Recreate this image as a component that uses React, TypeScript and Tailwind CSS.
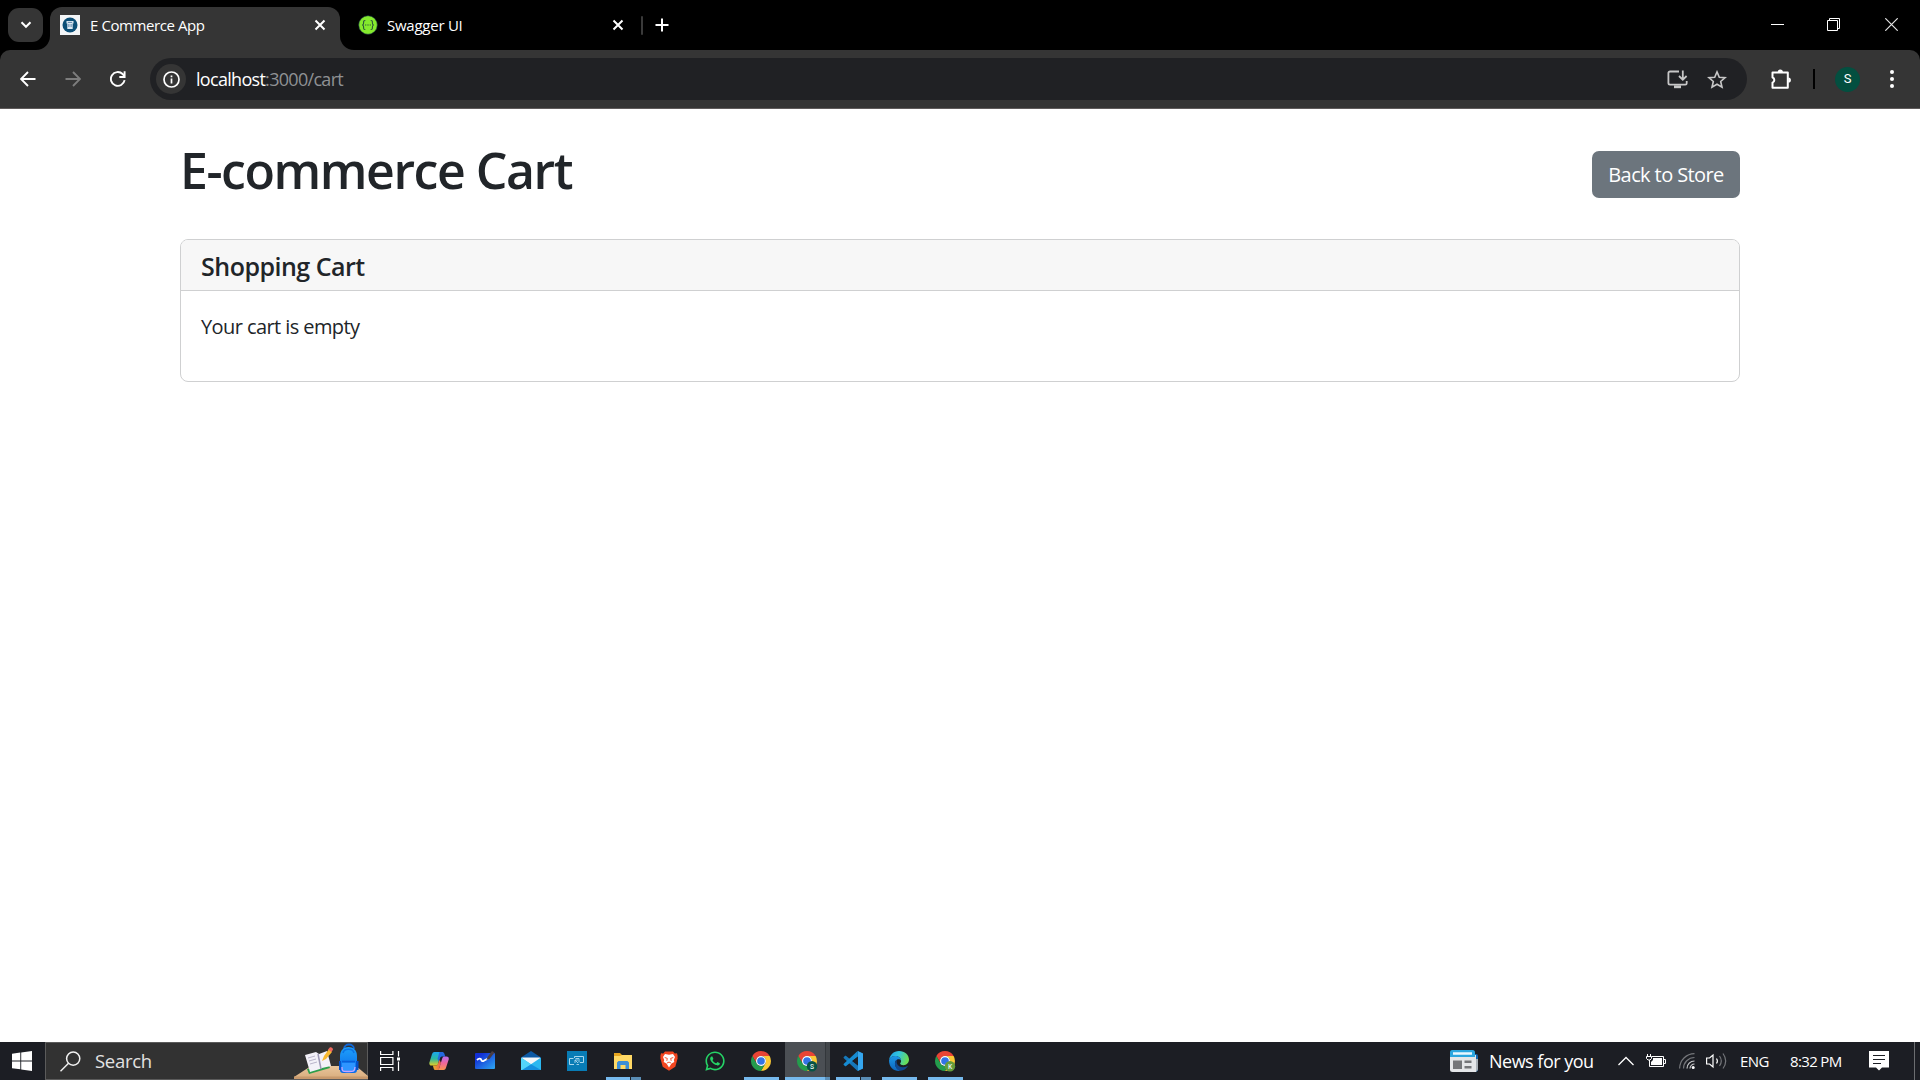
import React from "react";
import { FaWhatsapp } from "react-icons/fa";

function ChromeLogo({ badge, color }: { badge?: string; color?: string }) {
  return (
    <svg width="20" height="20" viewBox="0 0 48 48" className="overflow-visible">
      <path fill="#e94435" d="M24 13H43.05A22 22 0 0 0 4.95 13L14.47 29.5A11 11 0 0 1 24 13Z" transform="translate(-2.2 -2.2) scale(1.09)" />
      <path fill="#fcc934" d="M24 13H43.05A22 22 0 0 1 24 46L33.53 29.5A11 11 0 0 0 24 13Z" transform="translate(-2.2 -2.2) scale(1.09)" />
      <path fill="#249c4c" d="M14.47 29.5L4.95 13A22 22 0 0 0 24 46L33.53 29.5A11 11 0 0 1 14.47 29.5Z" transform="translate(-2.2 -2.2) scale(1.09)" />
      <circle cx="24" cy="24" r="12" fill="#fff" />
      <circle cx="24" cy="24" r="9.2" fill="#3273e6" />
      {badge && (
        <>
          <circle cx="36" cy="36.500" r="12.500" fill={color} />
          <text x="36" y="42.500" fontSize="16" fontFamily="Roboto, sans-serif" fontWeight="500" fill="#e8f3ee" textAnchor="middle">{badge}</text>
        </>
      )}
    </svg>
  );
}

function CloseX() {
  return (
    <svg width="12" height="12" viewBox="0 0 12 12" stroke="#fff" strokeWidth="2" fill="none">
      <path d="M1.5 1.5l9 9M10.5 1.5l-9 9" />
    </svg>
  );
}

function TabStrip() {
  return (
    <div className="flex h-[50px] bg-black">
      <div className="z-10 mt-2 ml-2 flex h-[34px] w-[35px] items-center justify-center rounded-[11px] bg-[#353535]">
        <svg width="12" height="8" viewBox="0 0 12 8" fill="none" stroke="#fff" strokeWidth="2"><path d="M1.5 1.3L6 5.8l4.500-4.500" /></svg>
      </div>
      <div className="relative mt-[7px] ml-[7px] flex h-[43px] w-[290px] items-center rounded-t-[12px] bg-[#353535] pr-[14px] pb-[7px] pl-[10px]">
        <div className="absolute bottom-0 -left-[14px] size-[14px] bg-[#353535]"><div className="size-full rounded-br-[14px] bg-black" /></div>
        <div className="absolute -right-[14px] bottom-0 size-[14px] bg-[#353535]"><div className="size-full rounded-bl-[14px] bg-black" /></div>
        <svg width="20" height="20" viewBox="0 0 20 20">
          <rect width="20" height="20" fill="#f3f5f7" />
          <circle cx="10" cy="10" r="7.500" fill="#0c4f77" />
          <path d="M6.500 6h7v2.500h-.8V14H7.300V8.500h-.8z" fill="#dce9f2" />
          <path d="M7.800 7.400h4.400M8.900 9v3M11.100 9v3" stroke="#5b83a8" strokeWidth="1" />
        </svg>
        <span className="mt-px ml-[10px] flex-1 text-[15px] tracking-[-0.420px] text-white">E Commerce App</span>
        <CloseX />
      </div>
      <div className="mt-[7px] flex h-[36px] w-[301px] items-center pr-[17px] pl-[18px]">
        <svg width="20" height="20" viewBox="0 0 20 20">
          <circle cx="10" cy="10" r="9.300" fill="#85ea2d" stroke="#173647" strokeWidth=".6" />
          <path d="M7.300 5.500c-1.800 0-1.700.7-1.700 2.500 0 1.300-.3 1.900-1.300 2 1 .1 1.300.7 1.300 2 0 1.800-.1 2.500 1.700 2.500M12.700 5.500c1.800 0 1.700.7 1.700 2.500 0 1.300.3 1.900 1.300 2-1 .1-1.300.7-1.300 2 0 1.800.1 2.500-1.700 2.500" fill="none" stroke="#29523b" strokeWidth="1.100" />
          <path d="M7.100 10h1.200M9.400 10h1.200M11.700 10h1.200" stroke="#29523b" strokeWidth="1.200" />
        </svg>
        <span className="mt-px ml-[9px] flex-1 text-[15px] tracking-[-0.250px] text-white">Swagger UI</span>
        <CloseX />
      </div>
      <div className="mt-4 h-[19px] w-[2px] rounded bg-[#3a3a3a]" />
      <svg className="mt-[18px] ml-[12px]" width="14" height="14" viewBox="0 0 14 14" stroke="#fff" strokeWidth="2"><path d="M.5 7h13M7 .5v13" /></svg>
      <div className="ml-auto flex pt-[18px] pr-[22px]">
        <svg width="13" height="13" viewBox="0 0 13 13"><path d="M0 6.500h13" stroke="#fff" /></svg>
        <svg className="ml-[43px]" width="13" height="13" viewBox="0 0 13 13" fill="none" stroke="#fff"><path d="M.5 2.500h10v10H.5zM2.500 2.500v-2h10v10h-2" /></svg>
        <svg className="ml-[45px]" width="13" height="13" viewBox="0 0 13 13" stroke="#e4e4e4" strokeWidth="1.200"><path d="M.3.3l12.400 12.400M12.700.3L.3 12.700" /></svg>
      </div>
    </div>
  );
}

function Toolbar() {
  return (
    <div className="bg-black">
      <div className="flex h-[59px] items-center rounded-t-[10px] border-b border-[#5f5b5b] bg-[#353535] pl-[20px]">
        <svg width="16" height="16" viewBox="0 0 16 16" fill="none" stroke="#fff" strokeWidth="1.900"><path d="M15.500 8H1.500M8 1L1 8l7 7" /></svg>
        <svg className="ml-[29px]" width="16" height="16" viewBox="0 0 16 16" fill="none" stroke="#7d7d7d" strokeWidth="1.900"><path d="M.5 8h14M8 1l7 7-7 7" /></svg>
        <svg className="ml-[29px]" width="16" height="16" viewBox="0 0 16 16" fill="none" stroke="#fff" strokeWidth="1.900"><path d="M14.600 9.200A6.900 6.900 0 1 1 12.600 3L14.500 5" /><path d="M14.600.3V6H9.300" /></svg>
        <div className="ml-[24px] flex h-[42px] w-[1597px] items-center rounded-full bg-[#202124] pl-[6px]">
          <div className="flex size-[30px] items-center justify-center rounded-full bg-[#353535]">
            <svg width="17" height="17" viewBox="0 0 17 17" fill="none" stroke="#fff" strokeWidth="1.700"><circle cx="8.500" cy="8.500" r="7.500" /><path d="M8.500 7.500v5M8.500 4.500v1.700" /></svg>
          </div>
          <span className="ml-[10px] text-[18px] tracking-[-0.700px] text-[#8f9194]"><span className="text-white">localhost</span>:3000/cart</span>
          <svg className="ml-auto" width="21" height="19" viewBox="0 0 21 19" fill="none" stroke="#c7c7c7" strokeWidth="1.800"><path d="M12 1.500H3a1.600 1.600 0 0 0-1.600 1.600v10A1.600 1.600 0 0 0 3 14.700h15.300a1.400 1.400 0 0 0 1.400-1.400V11M15.800.5v8.800M12 6l3.800 3.800L19.600 6" /><path d="M7 16.800h7" strokeWidth="2.800" /></svg>
          <svg className="mr-[20px] ml-[19px]" width="20" height="19" viewBox="0 0 20 19" fill="none" stroke="#c7c7c7" strokeWidth="1.600"><path d="M10 1.900l2.300 5.300 5.800.5-4.400 3.800 1.300 5.700-5-3-5 3 1.300-5.700-4.400-3.800 5.800-.5z" /></svg>
        </div>
        <svg className="ml-[24px]" width="21" height="21" viewBox="0 0 21 21"><path d="M1.500 3.400h15.300v15.300H1.500v-5.100a2.700 2.700 0 0 0 0-5.100z" fill="none" stroke="#fff" strokeWidth="2" strokeLinejoin="round" /><path d="M6.700 3a2.600 2.600 0 0 1 5.200 0zM17.300 8.400a2.600 2.600 0 0 1 0 5.200z" fill="#fff" /></svg>
        <div className="ml-[21px] h-5 w-[2px] bg-black" />
        <div className="ml-[20px] flex size-[25px] items-center justify-center rounded-full bg-[#034f40] font-[Roboto] text-[13px] text-white">S</div>
        <svg className="ml-[30px]" width="4" height="18" viewBox="0 0 4 18" fill="#fff"><circle cx="2" cy="2" r="2" /><circle cx="2" cy="9" r="2" /><circle cx="2" cy="16" r="2" /></svg>
      </div>
    </div>
  );
}

function CartPage() {
  return (
    <main className="flex-1 bg-white text-[#212529]">
      <div className="mx-auto w-[1560px] pt-[32px]">
        <div className="flex items-start justify-between">
          <h1 className="text-[50px] leading-[59px] font-semibold tracking-[-1.450px]">E-commerce Cart</h1>
          <button className="mt-[10px] h-[47px] w-[148px] rounded-[7px] bg-[#6c757d] text-[20px] tracking-[-0.600px] whitespace-nowrap text-white">Back to Store</button>
        </div>
        <section className="mt-[39px] overflow-hidden rounded-[8px] border border-[#cfd0d1]">
          <div className="h-[51px] border-b border-[#cfd0d1] bg-[#f7f7f7] px-5">
            <h2 className="text-[25px] leading-[52px] font-semibold tracking-[-0.500px]">Shopping Cart</h2>
          </div>
          <div className="h-[90px] px-5 pt-[20px]">
            <p className="text-[20px] leading-[32px] tracking-[-0.580px]">Your cart is empty</p>
          </div>
        </section>
      </div>
    </main>
  );
}

function TaskCell({ line, children }: { line?: "full" | "split" | "active"; children: React.ReactNode }) {
  return (
    <div className={line === "active" ? "relative flex h-full w-[46px] items-center justify-center bg-[linear-gradient(90deg,#1c1e24_0_1px,#4b4f54_1px_41px,#33373b_41px_42px,#42464a_42px)]" : "relative flex h-full w-[46px] items-center justify-center"}>
      {children}
      {line === "full" && <div className="absolute bottom-0 left-[6px] h-[3px] w-[35px] bg-[#76b9ed]" />}
      {line === "split" && <div className="absolute bottom-0 left-[6px] flex h-[3px] w-[35px] gap-px"><div className="w-[24px] bg-[#76b9ed]" /><div className="flex-1 bg-[#5a8db5]" /></div>}
      {line === "active" && <div className="absolute bottom-0 left-[1px] flex h-[3px] w-[45px]"><div className="w-[40px] bg-[#76b9ed]" /><div className="flex-1 bg-[#5a8db5]" /></div>}
    </div>
  );
}

function SearchArt() {
  return (
    <svg width="74" height="36" viewBox="0 0 74 36">
      <defs>
        <linearGradient id="desk" x1="0" y1="0" x2="0" y2="1"><stop offset="0" stopColor="#e9c59b" /><stop offset="1" stopColor="#d7ab7c" /></linearGradient>
        <linearGradient id="bag" x1="0" y1="0" x2="0" y2="1"><stop offset="0" stopColor="#1fa1fb" /><stop offset="1" stopColor="#0869e8" /></linearGradient>
      </defs>
      <path d="M0 34L17 23h45l12 10v3H0z" fill="url(#desk)" />
      <path d="M0 33.500h74V36H0z" fill="#c8996c" />
      <path d="M13 26l21-6 2 5-21 6z" fill="#2d9e4b" />
      <path d="M11 12l11-3 3 2 8-3 4 15-9 2-2 1-10 3z" fill="#f3f1f8" />
      <path d="M24 11l3 15" stroke="#9d98b5" strokeWidth="1.500" />
      <path d="M14 15l7-2M15 18l7-2M16 21l7-2" stroke="#b9b5ca" />
      <path d="M28 18l2-5 5-7 3 3-6 7z" fill="#f8b930" />
      <path d="M34 6.500l2-2.200c1.500-.5 3 .7 3 2.200L37.500 9z" fill="#f0695e" />
      <path d="M50 6c0-6 10-6 10 0" fill="none" stroke="#1268d8" strokeWidth="1.800" />
      <path d="M46 13c0-12 17-12 17 0v14c0 2-1 3-3 3H49c-2 0-3-1-3-3z" fill="url(#bag)" />
      <path d="M45 18h2v9h-2zM62 18h2.500v9H62z" fill="#0650c8" />
      <path d="M49 10c1-5 10-5 11 0" fill="none" stroke="#0b74e6" strokeWidth="1.500" />
      <path d="M48 20h13v7c0 1.500-1 2-2 2h-9c-1 0-2-.5-2-2z" fill="#2f95ff" />
      <path d="M48 18.500h13" stroke="#0a5fda" strokeWidth="1.500" />
      <path d="M48 24c-.5 5 2 4.500 6 4.500s7 .5 7-4.500" fill="none" stroke="#c9a4ff" strokeWidth="1.300" />
    </svg>
  );
}

function Taskbar() {
  return (
    <div className="flex h-[38px] bg-[#1c1e24] text-white">
      <div className="flex w-[45px] items-center pl-[12px]">
        <svg width="20" height="20" viewBox="0 0 20 20" fill="#fff"><path d="M0 2.800L8.300 1.600v7.900H0zM9.200 1.500L20 0v9.500H9.200zM0 10.400h8.300v7.900L0 17.200zM9.200 10.400H20V20L9.200 18.400z" /></svg>
      </div>
      <div className="flex w-[323px] items-center border border-[#5b5b5b] bg-[#323232] pl-[14px]">
        <svg width="21" height="21" viewBox="0 0 21 21" fill="none" stroke="#f2f2f2" strokeWidth="1.500"><circle cx="13.200" cy="7.600" r="6.600" /><path d="M8.500 12.300L.5 20.300" /></svg>
        <span className="ml-[14px] text-[18.500px] tracking-[-0.300px] text-[#e2e2e2]">Search</span>
        <div className="-mr-px ml-auto"><SearchArt /></div>
      </div>
      <div className="flex w-[48px] items-center pl-[12px]">
        <svg width="20" height="20" viewBox="0 0 20 20" fill="none" stroke="#fff" strokeWidth="1.200"><path d="M.6 0v3.500h12.300V0M.6 6.500h12.300v7H.6zM.6 20v-3.500h12.300V20M18.500 0v5.500M18.500 10.500V20" /><path d="M17 6.500h3v3h-3z" fill="#fff" stroke="none" /></svg>
      </div>
      <TaskCell>
        <svg width="20" height="20" viewBox="0 0 20 20">
          <defs>
            <linearGradient id="cpA" x1="0" y1="0" x2="0" y2="1"><stop offset="0" stopColor="#1ba6ee" /><stop offset=".5" stopColor="#2bb9a0" /><stop offset="1" stopColor="#e5cf25" /></linearGradient>
            <linearGradient id="cpB" x1="0" y1="0" x2="0" y2="1"><stop offset="0" stopColor="#b76cf0" /><stop offset=".5" stopColor="#f0679a" /><stop offset="1" stopColor="#f9954d" /></linearGradient>
            <linearGradient id="cpC" x1="0" y1="0" x2="1" y2="0"><stop offset="0" stopColor="#e8b62c" /><stop offset="1" stopColor="#f0584f" /></linearGradient>
          </defs>
          <path d="M5.500 1h7l-4 13.600H2.700C.8 14.600 0 13.500.4 11.500L3 3.200C3.500 1.800 4.200 1 5.500 1z" fill="url(#cpA)" />
          <path d="M10.500 1h2.800c1 0 1.700.6 2 1.600l1 3h-2.800c-1.200 0-2.200.5-2.700 2l-1 3L8.500 8z" fill="#2468df" />
          <path d="M9.500 19H6.700c-1 0-1.700-.6-2-1.600l-.8-2.800h2.900c1.200 0 1.800-.5 2.200-1.800l1.500-4L12 12z" fill="url(#cpC)" />
          <path d="M14.500 19H8.300c1 0 1.700-.9 2-2l3-9.700c.4-1.400 1-1.900 2.200-1.900h1.900c1.900 0 2.700 1.300 2.300 3.200L17 16.800c-.5 1.400-1.200 2.200-2.500 2.200z" fill="url(#cpB)" />
        </svg>
      </TaskCell>
      <TaskCell>
        <svg width="20" height="20" viewBox="0 0 20 20" className="overflow-visible">
          <defs><linearGradient id="wb" x1="0" y1="0" x2="1" y2="1"><stop offset=".2" stopColor="#1230d5" /><stop offset="1" stopColor="#2ea9f2" /></linearGradient></defs>
          <rect y="2" width="20" height="16" rx="1" fill="url(#wb)" />
          <path d="M2 9c2-2 4-1.500 4.300 0s1.500 1.500 3 .5L13 7.500" fill="none" stroke="#fff" strokeWidth="1.800" />
          <path d="M11.500 9l1-3L17 0l2.500 1.500L14.500 8z" fill="#4b3d40" />
        </svg>
      </TaskCell>
      <TaskCell>
        <svg width="20" height="20" viewBox="0 0 20 20">
          <path d="M0 6.500L10 0l10 6.500V12H0z" fill="#0c59a4" />
          <path d="M1 6.500h18v7H1z" fill="#f4f7f9" />
          <path d="M0 6.500l10 6.800 10-6.800V19H0z" fill="#2cb8f0" />
          <path d="M0 19l10-5.700L20 19z" fill="#1590df" />
          <path d="M0 6.500l10 6.800L1 19H0z" fill="#52d5fa" />
        </svg>
      </TaskCell>
      <TaskCell>
        <svg width="20" height="20" viewBox="0 0 20 20" fill="none" stroke="#a9d7ec" strokeWidth="1">
          <rect width="20" height="20" fill="#087cb5" stroke="none" />
          <path d="M7.500 7V5.500h9v6h-3.500M7 13.500H2.500v-6h4" /><path d="M8.500 7.500H12v4M12 13.500H9.500M8 9l3 3M8 12V9h3" strokeWidth=".9" />
        </svg>
      </TaskCell>
      <TaskCell line="split">
        <svg width="20" height="20" viewBox="0 0 20 20">
          <path d="M1 2h6l2 2h9v3H1z" fill="#e6a51f" />
          <path d="M1 5h6l2-1h10v14H1z" fill="#ffd965" />
          <path d="M4 18v-6.500l1.500-1.500h9l1.500 1.500V18h-3.500v-4h-5v4z" fill="#3d8fd6" />
        </svg>
      </TaskCell>
      <TaskCell>
        <svg width="20" height="20" viewBox="0 0 20 20">
          <path d="M6 .5h8L15.800 2.400 18 2.200l.7 3-.3.9.3 1-2.400 8.600L10 19.700l-6.300-4L1.300 7.100l.3-1-.3-.9.700-3 2.200.2z" fill="#f24620" />
          <path d="M10 3.700L14 3l2 3-1.200 3 .5 2-2.800 1.600L10 16.500l-2.500-3.900L4.700 11l.5-2L4 6l2-3z" fill="#fff" />
          <path d="M5.700 6.500l2.600.9-.5 2.400M14.300 6.500l-2.600.9.5 2.400M8 12l2-.9 2 .9" stroke="#f24620" fill="none" strokeWidth=".9" />
        </svg>
      </TaskCell>
      <TaskCell><FaWhatsapp size={22} color="#25d366" /></TaskCell>
      <TaskCell line="full"><ChromeLogo /></TaskCell>
      <TaskCell line="active"><ChromeLogo badge="S" color="#075346" /></TaskCell>
      <TaskCell line="split">
        <svg width="20" height="20" viewBox="0 0 24 24">
          <path d="M17.500 0L24 2.900v18.200L17.500 24 1 8.800c-.6-.6-.6-1.200 0-1.700l1.300-1.200c.5-.4 1-.4 1.500 0L18 17.500z" fill="#1678ba" />
          <path d="M17.500 0L1 15.200c-.6.600-.6 1.200 0 1.700l1.300 1.200c.5.4 1 .4 1.500 0L18 6.500z" fill="#168bd2" />
          <path d="M18 6.500L11 12l7 5.500z" fill="#1c1e24" />
          <path d="M17.500 0L24 2.900v18.200L17.500 24c.3-.2.500-.6.500-1V1c0-.4-.2-.8-.5-1z" fill="#35a6ee" />
        </svg>
      </TaskCell>
      <TaskCell line="full">
        <svg width="20" height="20" viewBox="0 0 24 24">
          <defs>
            <linearGradient id="eg1" x1="0" y1="0" x2="1" y2=".3"><stop offset="0" stopColor="#1e9fe8" /><stop offset=".5" stopColor="#32c5df" /><stop offset="1" stopColor="#68dc58" /></linearGradient>
            <linearGradient id="eg2" x1="0" y1="0" x2="0" y2="1"><stop offset="0" stopColor="#1c97e6" /><stop offset="1" stopColor="#0d65bd" /></linearGradient>
          </defs>
          <path d="M0 11.500C.6 5 5.500 0 12 0c7 0 12 4.800 12 10.300 0 4-3 6.700-6.600 6.700-2.500 0-4-1-4-2 0-.7 1.100-1 1.100-3C14.500 8 11 6 7.500 6 3.500 6 .8 8.500 0 11.500z" fill="url(#eg1)" />
          <path d="M0 11.500C.8 8.500 3.500 6 7.500 6c3.500 0 7 2 7 5.500-1-1.500-2.500-2-4-1.500-3 1-4 4-3 7.500 1 3.300 3.600 5.700 6.500 6.300-7 1.200-14-3.300-14-12.300z" fill="url(#eg2)" />
          <path d="M8.800 11C6.500 13 6.700 17 8.500 20c1.300 2.300 3.300 3.600 5.500 3.800 3.500-.4 6.600-2.300 8.400-5.100.3-.5-.1-.8-.6-.5-5 2.500-11 1-12.300-3.200-.5-1.500-.3-3 .3-4.200z" fill="#10488f" />
        </svg>
      </TaskCell>
      <TaskCell line="full"><ChromeLogo badge="K" color="#659c3b" /></TaskCell>

      <div className="ml-auto flex items-center">
        <svg width="28" height="22" viewBox="0 0 28 22">
          <path d="M22 4h4a2 2 0 0 1 2 2v13a3 3 0 0 1-3 3h-3z" fill="#1463ac" />
          <path d="M24.500 9H28v10a3 3 0 0 1-3.500 2.900z" fill="#a9b0b6" />
          <path d="M0 5h26v17H2.500A2.500 2.500 0 0 1 0 19.500z" fill="#e4e6e8" />
          <path d="M2 0h20.500A2.500 2.500 0 0 1 25 2.500V7H0V2a2 2 0 0 1 2-2z" fill="#2ba6df" />
          <path d="M3 3.500h19" stroke="#e9f7ff" strokeWidth="2.500" />
          <path d="M3 10.500h9v8.500H3zM14.500 10.500h7v2.500h-7zM14.500 16h7v2.500h-7z" fill="#747679" />
        </svg>
        <span className="ml-[11px] w-[129px] text-[18px] tracking-[-0.500px] whitespace-nowrap">News for you</span>
        <svg width="16" height="10" viewBox="0 0 16 10" fill="none" stroke="#fff" strokeWidth="1.300"><path d="M.5 9L8 1.500 15.500 9" /></svg>
        <svg className="ml-[12px]" width="20" height="14" viewBox="0 0 20 14" fill="none" stroke="#fff"><path d="M6 2.500h11.500v10H3.500v-3M18 5.500h1.500v4H18M1.500 0v2M4.500 0v2M.5 2.500h5v2l-1.500 1.500H2L.5 4.500zM3.500 6v4" /><path d="M7 4h9v7H5V8l2-2z" fill="#fff" stroke="none" /></svg>
        <svg className="ml-[13px]" width="16" height="16" viewBox="0 0 16 16" fill="none" strokeWidth="1.200"><path d="M.6 15.500A15 15 0 0 1 15.500.6M4.500 15.500A11 11 0 0 1 15.500 4.500" stroke="#75777b" /><path d="M8 15.500A7.500 7.500 0 0 1 15.500 8M11 15.500a4.500 4.500 0 0 1 4.500-4.500" stroke="#c7c8ca" /><circle cx="14.200" cy="14.500" r="1.500" fill="#fff" /></svg>
        <svg className="ml-[11px]" width="21" height="18" viewBox="0 0 21 18" fill="none" strokeWidth="1.200"><path d="M.6 6h3L7 3v12l-3.400-3h-3z" stroke="#fff" /><path d="M10.500 6.500q1.800 2.500 0 5" stroke="#fff" /><path d="M13.500 4q3.600 5 0 10M17 1.500q5.400 7.500 0 15" stroke="#74767a" /></svg>
        <span className="mt-px ml-[13px] w-[50px] text-[15px] tracking-[-0.600px]">ENG</span>
        <span className="mt-px w-[79px] text-[15px] tracking-[-0.650px] whitespace-nowrap">8:32 PM</span>
        <svg width="20" height="20" viewBox="0 0 20 20"><path d="M0 0h20v16.500h-7L10 19.500l-3-3H0z" fill="#fff" /><path d="M4 4.500h12M4 8.500h12M4 12.500h8" stroke="#1c1e24" strokeWidth="1.200" /></svg>
        <div className="mr-[5px] ml-[25px] h-[38px] w-px bg-[#6b6d70]" />
      </div>
    </div>
  );
}

export default function App() {
  return (
    <div className="flex h-[1080px] w-[1920px] flex-col overflow-hidden bg-white font-['Open_Sans','Noto_Sans',sans-serif]">
      <TabStrip />
      <Toolbar />
      <CartPage />
      <Taskbar />
    </div>
  );
}
